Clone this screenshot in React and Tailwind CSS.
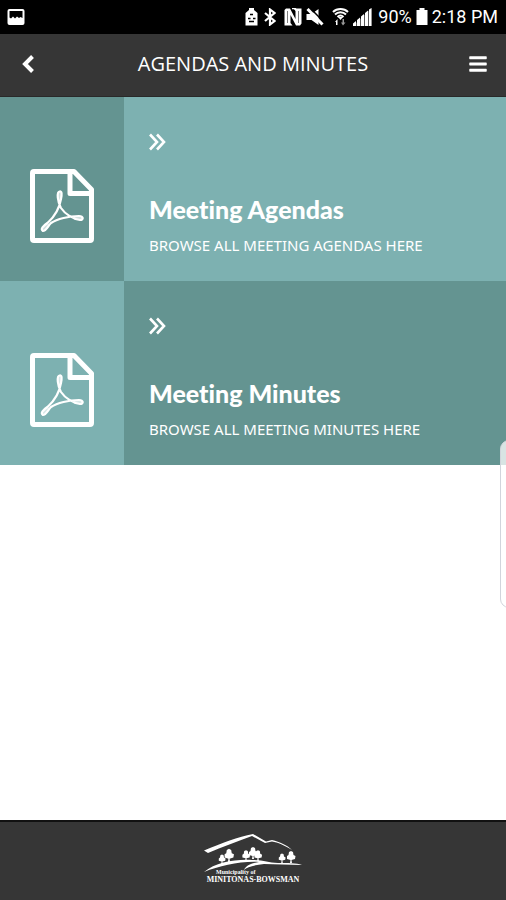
import React from "react";
import { FaBars } from "react-icons/fa";

const pages = [
  {
    title: "Meeting Agendas",
    text: "BROWSE ALL MEETING AGENDAS HERE",
    iconBg: "bg-[#649491]",
    bg: "bg-[#7db1b1]",
  },
  {
    title: "Meeting Minutes",
    text: "BROWSE ALL MEETING MINUTES HERE",
    iconBg: "bg-[#7db1b1]",
    bg: "bg-[#649491]",
  },
];

const PictureIcon = () => (
  <svg width="18" height="18" viewBox="0 0 18 18" aria-hidden="true">
    <rect x="0.5" y="1" width="17" height="16" rx="2" fill="white" />
    <path d="M2.500 3h13v7l-2-1-1.500 1-2-1.500-2 2-2-2-2 2-1.500-1z" fill="black" />
  </svg>
);

const BatterySaverIcon = () => (
  <svg width="13" height="18" viewBox="0 0 13 18" aria-hidden="true">
    <path d="M4 0h5v2l3.500 3v12.500H0.500V5L4 2z" fill="white" />
    <path d="M5 6.500h3M3 10.500h2.500M8 10.500h2.500M4 13.500h5" stroke="black" strokeWidth="1.600" fill="none" />
  </svg>
);

const BluetoothIcon = () => (
  <svg width="12" height="18" viewBox="0 0 12 18" fill="none" stroke="white" strokeWidth="2.200" aria-hidden="true">
    <path d="M1 5l9.500 8L6 16.500v-15L10.500 5L1 13" />
  </svg>
);

const NfcIcon = () => (
  <svg width="18" height="18" viewBox="0 0 18 18" aria-hidden="true">
    <path d="M2 0.500H6L11.500 11V3L9.500 0.500H17.500V15.500L16 17.500H12L6.500 7V15L8.500 17.500H0.500V2z" fill="white" />
    <path d="M3.500 3v12M14.500 3v12" stroke="black" strokeWidth="1" opacity="0.500" />
    <path d="M8 0.500h3l2 2v11" stroke="white" strokeWidth="1.500" fill="none" />
  </svg>
);

const MuteIcon = () => (
  <svg width="18" height="18" viewBox="0 0 18 18" aria-hidden="true">
    <path d="M0.500 6h5l7-5v16l-7-5h-5z" fill="white" />
    <path d="M4 0l14 14" stroke="black" strokeWidth="1.500" />
    <path d="M1.500 1l15 15.500" stroke="white" strokeWidth="3" />
  </svg>
);

const WifiIcon = () => (
  <svg width="17" height="18" viewBox="0 0 17 18" aria-hidden="true">
    <path d="M1 4c4-4 11-4 15 0M3 6.500c3-3 8-3 11 0M5.500 9c2-2 4-2 6 0" stroke="white" strokeWidth="2" fill="none" />
    <path d="M6 9h5l-2.500 3z" fill="white" />
    <path d="M3 14L5.500 11v6H4v-3z" fill="white" />
    <path d="M11 17.500L9 14.500h1.500V11H12v3.500h1.500z" fill="white" opacity="0.600" />
  </svg>
);

const SignalIcon = () => (
  <svg width="19" height="18" viewBox="0 0 19 18" aria-hidden="true">
    <path d="M0 15.500l3-2.500v5H0zM4 12l3-2.500V18H4zM8 8.500l3-2.500v12H8zM12 5l3-2.500V18h-3zM16 1.500L18.500 0V18H16z" fill="white" />
    <path d="M0 18L18.500 0V18z" fill="white" opacity="0.350" />
  </svg>
);

const BatteryIcon = () => (
  <svg width="12" height="18" viewBox="0 0 12 18" aria-hidden="true">
    <path d="M3.500 0h5v2h3v15H0.500V2h3z" fill="white" />
  </svg>
);

const PdfIcon = () => (
  <svg
    width="64"
    height="74"
    viewBox="0 0 64 74"
    fill="none"
    stroke="white"
    strokeLinejoin="round"
    aria-hidden="true"
  >
    <path d="M4 2.500H44L61.500 20.500V70a1.500 1.500 0 0 1-1.500 1.500H4A1.500 1.500 0 0 1 2.500 70V4A1.500 1.500 0 0 1 4 2.500z" strokeWidth="5" />
    <path d="M40 3V24.500H61" strokeWidth="5" />
    <path
      d="M29.500 22.500C26.500 23 27.500 33 31 39C35 45 43 50 50 51C54 51 53.500 47 49 47C39 47 27 50 21 54C18 57 16 62 13 62C10 60 13 57 18 53.500C25 47 29.500 39 31 30C32 25 32 22 29.500 22.500z"
      strokeWidth="2.200"
    />
    <path d="M29.500 24v6M45 49l6 0.500M13.500 60l4-4" strokeWidth="3.500" strokeLinecap="round" opacity="0.700" />
  </svg>
);

const DoubleChevron = () => (
  <svg width="17" height="18" viewBox="0 0 17 18" fill="none" stroke="white" strokeWidth="2.600" aria-hidden="true">
    <path d="M1 1.500L8 9L1 16.500M8 1.500L15 9L8 16.500" />
  </svg>
);

const Tree = ({ x, y, s = 1 }) => (
  <g transform={`translate(${x} ${y}) scale(${s})`}>
    <path d="M-1 0L-0.500-3L-4-4L-4-7L-2.500-8L-2-11L0-12L2-11L2.500-8L4.500-7L4-4L0.500-3L1 0z" fill="white" />
  </g>
);

const Logo = () => (
  <div className="flex flex-col items-center text-white">
    <svg width="98" height="39" viewBox="0 0 98 39" aria-hidden="true">
      <path d="M0 16.500C18 9 34 3 49 0L62 7.500L68 6C76 8 83 11 88 16C80 11 74 8.500 68 7.500L61 9L48 2C34 7 18 13 4 19z" fill="white" />
      <path d="M0 38C12 28 32 25 48 26C60 26 64 29 74 29C84 29 92 29 98 31C84 31 72 30 60 30C50 31 43 33 40 36C42 31 49 29 55 28C36 27 16 32 0 38z" fill="white" />
      <Tree x={18} y={30} s={0.8} />
      <Tree x={25} y={28} s={1.100} />
      <Tree x={42} y={27} s={0.900} />
      <Tree x={49} y={25} s={1} />
      <Tree x={54} y={27} s={0.900} />
      <Tree x={78} y={29} s={0.800} />
      <Tree x={87} y={29} s={1} />
    </svg>
    <div className="-mt-1 w-full pl-3 text-[6px] leading-[6px] font-bold">Municipality of</div>
    <div className="text-[8px] leading-[10px] font-bold">MINITONAS-BOWSMAN</div>
  </div>
);

const StatusBar = () => (
  <div className="flex h-[34px] items-center justify-between bg-black pr-2 pl-[7px] font-['Roboto',sans-serif] text-white">
    <PictureIcon />
    <div className="flex items-center text-lg leading-5">
      <BatterySaverIcon />
      <span className="ml-1.5"><BluetoothIcon /></span>
      <span className="ml-2"><NfcIcon /></span>
      <span className="ml-1"><MuteIcon /></span>
      <span className="ml-2"><WifiIcon /></span>
      <span className="ml-1"><SignalIcon /></span>
      <span className="ml-1.5">90%</span>
      <span className="mx-1"><BatteryIcon /></span>
      <span>2:18 PM</span>
    </div>
  </div>
);

const Header = () => (
  <header className="flex h-[63px] items-center justify-between border-b border-[#292929] bg-[#363636] px-[18px] pb-0.5 text-white">
    <button type="button" aria-label="Back" className="flex w-5 justify-center">
      <svg width="14" height="20" viewBox="0 0 14 20" fill="none" stroke="white" strokeWidth="4" aria-hidden="true">
        <path d="M11.500 2.500L4 10L11.500 17.500" />
      </svg>
    </button>
    <h1 className="text-xl leading-6">AGENDAS AND MINUTES</h1>
    <button type="button" aria-label="Menu" className="flex w-5 justify-center">
      <FaBars className="size-5" />
    </button>
  </header>
);

const App = () => {
  return (
    <div className="relative flex min-h-screen flex-col overflow-hidden bg-white font-['Open_Sans',sans-serif]">
      <StatusBar />
      <Header />
      <main className="flex-1">
        {pages.map((page) => (
          <a key={page.title} href="#" className="flex text-white">
            <div className={`flex w-[124px] shrink-0 justify-center pt-[72px] ${page.iconBg}`}>
              <PdfIcon />
            </div>
            <div className={`flex-1 pt-9 pb-6 pl-[25px] ${page.bg}`}>
              <DoubleChevron />
              <h2 className="mt-[42px] font-['Lato',sans-serif] text-[25px] leading-8 font-black [font-variant-ligatures:none]">
                {page.title}
              </h2>
              <p className="mt-2 font-['Noto_Sans',sans-serif] text-[15px] leading-6">{page.text}</p>
            </div>
          </a>
        ))}
      </main>
      <footer className="flex h-20 justify-center border-t-2 border-[#111] bg-[#363636] pt-3 font-['Liberation_Serif',serif]">
        <Logo />
      </footer>
      {/* edge panel handle */}
      <div className="absolute top-[440px] -right-3 h-[168px] w-[18px] rounded-xl border border-gray-300 bg-white/75" />
    </div>
  );
};

export default App;
